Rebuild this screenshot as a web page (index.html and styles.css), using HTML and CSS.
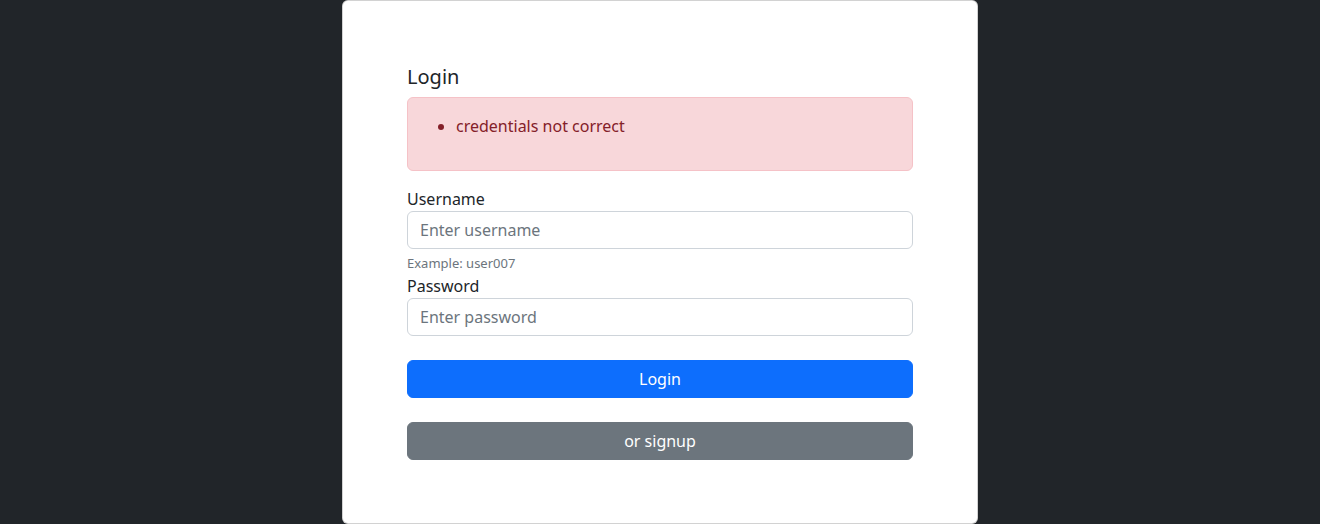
FILE: index.html
```html
<!DOCTYPE html>
<html lang="en">
<head>
<meta charset="utf-8">
<title>Login</title>
<link rel="stylesheet" href="styles.css">
</head>
<body>
<main class="page">
  <div class="card">
    <h5 class="title">Login</h5>
    <div class="alert">
      <ul class="errors">
        <li>credentials not correct</li>
      </ul>
    </div>
    <form class="form">
      <label class="label" for="username">Username</label>
      <input class="input" id="username" type="text" placeholder="Enter username">
      <div class="hint">Example: user007</div>
      <label class="label" for="password">Password</label>
      <input class="input" id="password" type="password" placeholder="Enter password">
      <button class="btn btn-primary" type="button">Login</button>
      <button class="btn btn-secondary" type="button">or signup</button>
    </form>
  </div>
</main>
</body>
</html>
```
FILE: styles.css
```css
* { box-sizing: border-box; }
html, body { margin: 0; padding: 0; }
body {
  background: #212529;
  font-family: "Segoe UI", "Noto Sans", "Open Sans", sans-serif;
  font-size: 16px;
  line-height: 1.5;
  color: #212529;
  height: 100vh;
  overflow: hidden;
}
.page {
  display: flex;
  justify-content: center;
  height: 100%;
}
.card {
  width: 636px;
  height: 100%;
  background: #fff;
  border: 1px solid rgba(0,0,0,.175);
  border-radius: 6px;
  padding: 65px 64px 0;
}
.title {
  margin: 0 0 8px;
  font-size: 20px;
  font-weight: 400;
  line-height: 1.2;
  margin-top: -1px;
}
.alert {
  background: #f8d7da;
  border: 1px solid #f5c2c7;
  color: #842029;
  border-radius: 6px;
  padding: 16px;
  margin-bottom: 16px;
}
.errors {
  margin: 0 0 16px;
  padding-left: 32px;
}
.form { display: flex; flex-direction: column; }
.label { display: block; }
.input {
  display: block;
  width: 100%;
  height: 38px;
  padding: 6px 12px;
  font: inherit;
  color: #212529;
  border: 1px solid #ced4da;
  border-radius: 6px;
  background: #fff;
}
.input::placeholder { color: #6c757d; }
.hint {
  margin-top: 4px;
  font-size: 13px;
  line-height: 21px;
  color: #6c757d;
}
.btn {
  display: block;
  width: 100%;
  height: 38px;
  margin-top: 24px;
  border: 1px solid transparent;
  border-radius: 6px;
  font: inherit;
  color: #fff;
  cursor: pointer;
}
.btn-primary { background: #0d6efd; border-color: #0d6efd; }
.btn-secondary { background: #6c757d; border-color: #6c757d; }
```
